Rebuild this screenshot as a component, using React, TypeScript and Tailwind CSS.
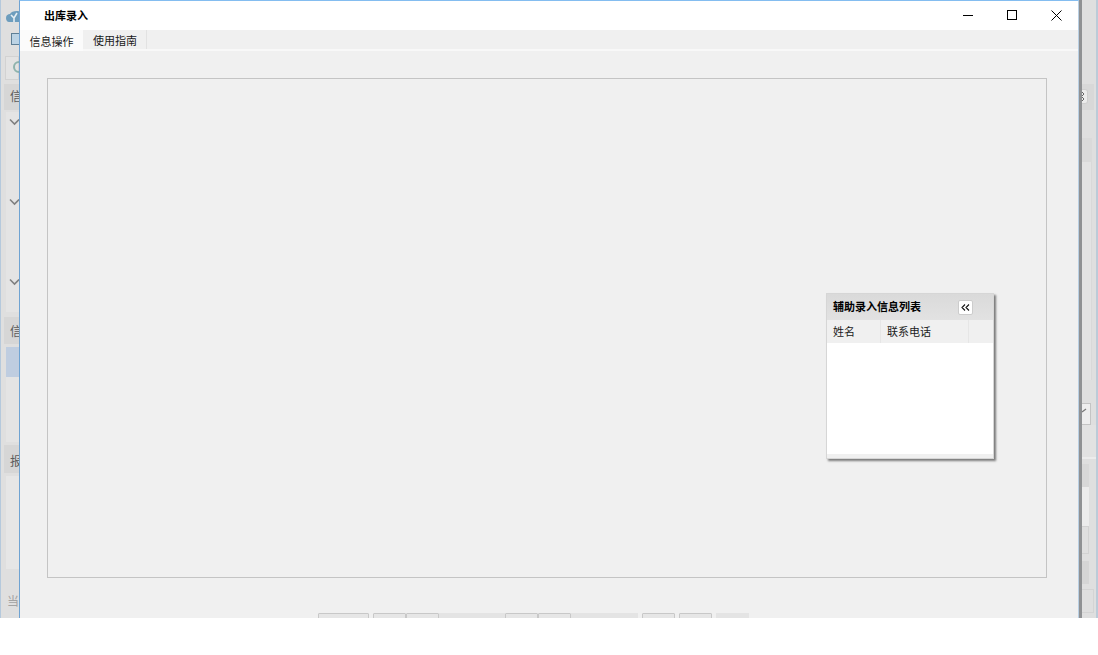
const FONT = "font-['Liberation_Sans','Noto_Sans_CJK_SC',sans-serif]"

function SectionHead({ label, className }: { label: string; className: string }) {
  return (
    <div className={`shrink-0 ml-[3px] bg-[#d6d6d6] pl-[6px] flex items-center whitespace-nowrap ${className}`}>{label}</div>
  )
}

function LeftStrip() {
  return (
    <div className="w-[19px] shrink-0 h-full bg-[#dfdfdf] border-l border-[#b5c9dc] overflow-hidden text-[12px] text-[#5c5c5c] flex flex-col">
      <div className="h-[31px] shrink-0 pt-[9px] pl-[4px]">
        <svg width="16" height="15" viewBox="0 0 16 15">
          <path d="M1 9c0-3 2-4 4-4 1-3 8-4 11-2v10H4C2 13 1 11 1 9z" fill="#6d9dbd" />
          <path d="M6 6l3 3 3-5M9 9v4" stroke="#e5eef3" strokeWidth="1.6" fill="none" />
        </svg>
      </div>
      <div className="h-[25px] shrink-0 pl-[10px] pt-[2px]">
        <div className="w-[12px] h-[12px] border border-[#5f7f96] bg-[#bcd3e4]" />
      </div>
      <div className="h-[24px] shrink-0 ml-[4px] border border-[#d2d2d2] bg-[#e3e3e3] pl-[7px] pt-[4px]">
        <div className="w-[12px] h-[12px] rounded-full border-2 border-[#8fb3ad]" />
      </div>
      <div className="h-[4px] shrink-0" />
      <SectionHead label="信息" className="h-[26px] pb-[1px]" />
      <div className="h-[2px] shrink-0" />
      <div className="h-[200px] shrink-0 ml-[5px] bg-[#e4e4e4] flex flex-col overflow-hidden">
        <Chevron />
        <div className="h-[40px] shrink-0" />
        <Chevron />
        <div className="h-[40px] shrink-0" />
        <Chevron />
      </div>
      <div className="h-[5px] shrink-0" />
      <SectionHead label="信息" className="h-[27px] pt-[3px]" />
      <div className="h-[3px] shrink-0" />
      <div className="h-[30px] shrink-0 ml-[5px] bg-[#bfcde0]" />
      <div className="h-[65px] shrink-0 ml-[5px] bg-[#e4e4e4]" />
      <div className="h-[3px] shrink-0" />
      <SectionHead label="报表" className="h-[28px] pt-[5px]" />
      <div className="h-[3px] shrink-0" />
      <div className="h-[93px] shrink-0 ml-[5px] bg-[#e6e6e6]" />
      <div className="h-[24px] shrink-0" />
      <div className="pl-[6px] leading-[18px] text-[#a3a3a3] whitespace-nowrap">当前</div>
    </div>
  )
}

function Chevron() {
  return (
    <div className="h-[40px] shrink-0 pl-[3px] pt-[6px]">
      <svg width="11" height="8" viewBox="0 0 11 8">
        <path d="M1 1.5l4.5 4.5L10 1.5" stroke="#808080" strokeWidth="1.6" fill="none" />
      </svg>
    </div>
  )
}

function RightStrip() {
  return (
    <div className="w-[19px] shrink-0 h-full bg-[#dfdfdf] border-l-[3px] border-l-[#8f9193] border-r-2 border-r-[#bccbd8] overflow-hidden flex flex-col">
      <div className="h-[84px] shrink-0" />
      <div className="h-[26px] shrink-0 w-[12px] bg-[#d8d8d8] py-[5px]">
        <div className="h-[15px] w-[6px] rounded-r-[3px] border border-l-0 border-[#cfcfcf] bg-[#ececec]">
          <svg width="4" height="13" viewBox="0 0 4 13">
            <path d="M0 2l2 2-2 2M0 7l2 2-2 2" stroke="#666" fill="none" />
          </svg>
        </div>
      </div>
      <div className="h-[28px] shrink-0" />
      <div className="h-[24px] shrink-0 w-[10px] bg-[#dadada]" />
      <div className="h-[218px] shrink-0 w-[10px] bg-[#e3e3e3] border-r border-[#d9d9d9]" />
      <div className="h-[23px] shrink-0" />
      <div className="h-[22px] shrink-0 w-[9px] border border-l-0 border-[#c4c4c4] bg-[#eeeeee] pt-[4px]">
        <svg width="5" height="5" viewBox="0 0 5 5">
          <path d="M0 4l4-3" stroke="#777" strokeWidth="1.2" />
        </svg>
      </div>
      <div className="h-[32px] shrink-0 bg-[#e2e2e2]" />
      <div className="h-[2px] shrink-0 bg-[#ececec]" />
      <div className="h-[5px] shrink-0" />
      <div className="h-[23px] shrink-0 w-[7px] bg-[#d8d8d8]" />
      <div className="h-[39px] shrink-0 w-[7px] bg-[#ececec]" />
      <div className="h-[28px] shrink-0 w-[7px] border border-l-0 border-[#d2d2d2]" />
      <div className="h-[7px] shrink-0" />
      <div className="h-[23px] shrink-0 w-[7px] bg-[#d5d5d5]" />
      <div className="h-[5px] shrink-0" />
      <div className="h-[24px] shrink-0 w-[12px] border border-l-0 border-[#d4d4d4]" />
    </div>
  )
}

function TitleBar() {
  return (
    <div className="h-[29px] shrink-0 bg-white flex items-center">
      <div className="pl-[24px] pt-[1px] text-[11px] font-bold text-black grow">出库录入</div>
      <div className="flex h-full items-center">
        <div className="w-[44px] flex justify-center">
          <svg width="11" height="11" viewBox="0 0 11 11"><path d="M0 5.5h10" stroke="#000" strokeWidth="1" /></svg>
        </div>
        <div className="w-[44px] flex justify-center">
          <svg width="11" height="11" viewBox="0 0 11 11"><rect x="0.5" y="0.5" width="9" height="9" stroke="#000" fill="none" /></svg>
        </div>
        <div className="w-[44px] flex justify-center">
          <svg width="11" height="11" viewBox="0 0 11 11"><path d="M0.5 0.5l10 10M10.5 0.5l-10 10" stroke="#000" strokeWidth="1" /></svg>
        </div>
      </div>
    </div>
  )
}

function Tabs() {
  return (
    <div className="h-[21px] shrink-0 flex border-b-2 border-[#f8f8f8] bg-[#f0f0f0] text-[11px] text-[#1a1a1a]">
      <div className="w-[63px] h-[21px] bg-[#fbfbfb] flex items-center justify-center pt-[3px]">信息操作</div>
      <div className="w-[64px] pl-[1px] border-r border-[#e2e2e2] flex items-center justify-center pt-[3px]">使用指南</div>
    </div>
  )
}

function HelperPanel() {
  return (
    <div className="w-[168px] h-[166px] ml-[778px] mt-[214px] border border-[#d6d6d6] bg-white shadow-[2px_2px_2px_#7c7c7c] flex flex-col">
      <div className="h-[26px] shrink-0 bg-linear-to-b from-[#dadada] to-[#e2e2e2] flex items-center pl-[6px] text-[11px] font-bold text-black">
        <span className="w-[125px]">辅助录入信息列表</span>
        <span className="w-[15px] h-[15px] bg-white rounded-[2px] border border-[#cccccc] flex items-center justify-center">
          <svg width="9" height="7" viewBox="0 0 9 7">
            <path d="M4 0.5L1 3.5l3 3M8 0.5L5 3.5l3 3" stroke="#111" strokeWidth="1.1" fill="none" />
          </svg>
        </span>
      </div>
      <div className="h-[23px] shrink-0 bg-[#f0f0f0] flex text-[11px] text-[#1a1a1a] leading-[24px]">
        <div className="w-[54px] pl-[6px] border-r border-[#e6e6e6]">姓名</div>
        <div className="w-[88px] pl-[6px] border-r border-[#e6e6e6]">联系电话</div>
      </div>
      <div className="grow" />
      <div className="h-[4px] shrink-0 bg-[#f0f0f0]" />
    </div>
  )
}

function PagerStubs() {
  const groups = [[51], [33, 33, 33, 33, 33, 33, 33, 34], [33], [33], [33]]
  // 禁用的按钮没有边框
  const faded = [2, 3, 6, 7]
  return (
    <div className="h-[5px] mt-[35px] ml-[298px] flex gap-[4px] overflow-hidden">
      {groups.map((g, i) => (
        <div key={i} className="flex">
          {g.map((w, j) => (
            <div
              key={j}
              style={{ width: w }}
              className={
                (i === 1 && faded.includes(j)) || i === 4
                  ? 'h-[8px] bg-[#e4e4e4]'
                  : 'h-[8px] bg-[#e6e6e6] border border-[#c8c8c8] rounded-t-[1px]'
              }
            />
          ))}
        </div>
      ))}
    </div>
  )
}

export default function App() {
  return (
    <div className={`w-[1098px] h-[655px] bg-white overflow-hidden ${FONT}`}>
      <div className="h-[618px] flex">
        <LeftStrip />
        <div className="w-[1060px] shrink-0 h-full flex flex-col bg-[#f0f0f0] border-l border-l-[#6fa3d2] border-r border-r-[#b9cfe3] border-t border-t-[#84bdf0]">
          <TitleBar />
          <Tabs />
          <div className="grow flex flex-col bg-[#f0f0f0] overflow-hidden">
            <div className="h-[500px] shrink-0 ml-[27px] mt-[27px] w-[1000px] border border-[#c4c4c4] bg-[#f0f0f0]">
              <HelperPanel />
            </div>
            <PagerStubs />
          </div>
        </div>
        <RightStrip />
      </div>
    </div>
  )
}
